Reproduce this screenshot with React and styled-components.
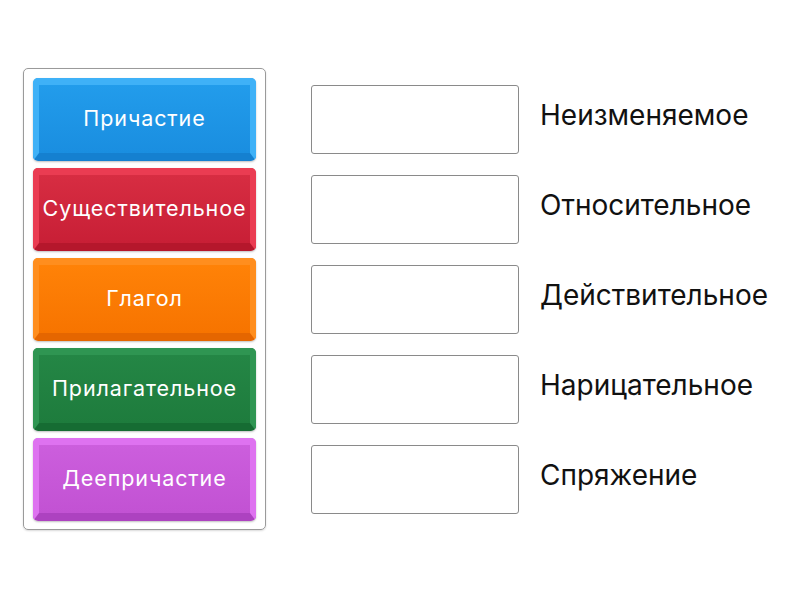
import styled, { createGlobalStyle } from 'styled-components';

const GlobalStyle = createGlobalStyle`
  html, body {
    margin: 0;
    padding: 0;
    background: #ffffff;
    font-family: Inter, 'Liberation Sans', sans-serif;
  }
`;

const Page = styled.div`
  width: 800px;
  height: 600px;
  display: flex;
  align-items: flex-start;
  padding: 68px 0 0 23px;
  box-sizing: border-box;
`;

const Tray = styled.div`
  width: 243px;
  box-sizing: border-box;
  border: 1px solid #9a9a9a;
  border-radius: 5px;
  padding: 9px 9px 8px 9px;
  display: flex;
  flex-direction: column;
  gap: 7px;
  box-shadow: 0 1px 2px rgba(0, 0, 0, 0.15);
`;

const Card = styled.div`
  height: 83px;
  box-sizing: border-box;
  border-radius: 5px;
  border-style: solid;
  border-width: 7px 6px 8px 6px;
  border-color: ${(p) => p.$light} ${(p) => p.$light} ${(p) => p.$dark} ${(p) => p.$light};
  background: linear-gradient(${(p) => p.$top}, ${(p) => p.$bottom});
  display: flex;
  align-items: center;
  justify-content: center;
  padding-bottom: 3px;
  color: #ffffff;
  font-size: 21.5px;
  letter-spacing: 0.9px;
  white-space: nowrap;
  box-shadow: 0 1px 2px rgba(0, 0, 0, 0.25);
`;

const Targets = styled.div`
  margin-left: 45px;
  margin-top: 17px;
  display: flex;
  flex-direction: column;
  gap: 21px;
`;

const Row = styled.div`
  display: flex;
  align-items: center;
  gap: 21px;
`;

const Slot = styled.div`
  width: 208px;
  height: 69px;
  box-sizing: border-box;
  border: 1px solid #8a8a8a;
  border-radius: 3px;
  background: #ffffff;
`;

const Label = styled.div`
  font-size: 28px;
  color: #111111;
  white-space: nowrap;
  margin-top: -9px;
`;

const cards = [
  { text: 'Причастие', light: '#3fb1f7', top: '#229ceb', bottom: '#1a8ee0', dark: '#1580d0' },
  { text: 'Существительное', light: '#ea3c52', top: '#d72d42', bottom: '#c81f36', dark: '#b5172c' },
  { text: 'Глагол', light: '#ff8e1e', top: '#ff8207', bottom: '#f77400', dark: '#e56600' },
  { text: 'Прилагательное', light: '#2f9552', top: '#248645', bottom: '#1e7c3d', dark: '#166c33' },
  { text: 'Деепричастие', light: '#de72f0', top: '#cc5edd', bottom: '#c252d3', dark: '#ad42c0' },
];

const labels = [
  'Неизменяемое',
  'Относительное',
  'Действительное',
  'Нарицательное',
  'Спряжение',
];

export default function App() {
  return (
    <>
      <GlobalStyle />
      <Page>
        <Tray>
          {cards.map((c) => (
            <Card key={c.text} $light={c.light} $top={c.top} $bottom={c.bottom} $dark={c.dark}>
              {c.text}
            </Card>
          ))}
        </Tray>
        <Targets>
          {labels.map((l) => (
            <Row key={l}>
              <Slot />
              <Label>{l}</Label>
            </Row>
          ))}
        </Targets>
      </Page>
    </>
  );
}
